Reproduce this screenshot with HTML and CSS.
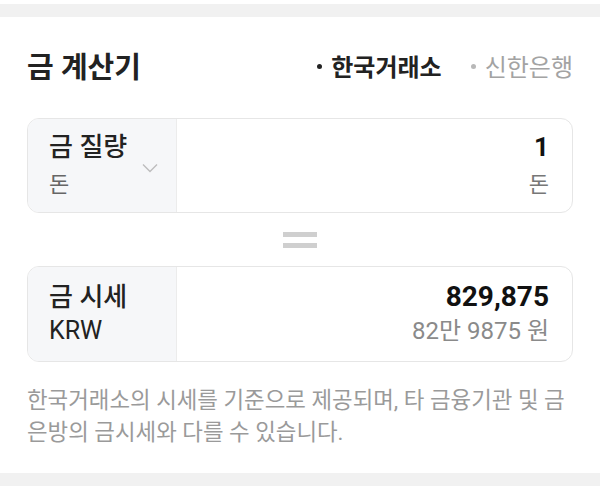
FILE: index.html
```html
<!DOCTYPE html>
<html lang="ko">
<head>
<meta charset="utf-8">
<link rel="stylesheet" href="styles.css">
</head>
<body>
<div class="band band-top"></div>
<section class="card">
  <header class="header">
    <h1 class="title">금 계산기</h1>
    <nav class="tabs">
      <span class="tab tab-active"><span class="dot"></span>한국거래소</span>
      <span class="tab"><span class="dot"></span>신한은행</span>
    </nav>
  </header>

  <div class="box box-weight">
    <div class="cell-left">
      <div class="lines">
        <div class="label">금 질량</div>
        <div class="sub">돈</div>
      </div>
      <svg class="chev" width="16" height="10" viewBox="0 0 16 10"><path d="M1 1.5 L8 8.5 L15 1.5" fill="none" stroke="#bdbdbd" stroke-width="1.4"/></svg>
    </div>
    <div class="cell-right">
      <div class="value">1</div>
      <div class="unit">돈</div>
    </div>
  </div>

  <div class="equals"><span class="bar"></span><span class="bar"></span></div>

  <div class="box box-price">
    <div class="cell-left">
      <div class="lines">
        <div class="label">금 시세</div>
        <div class="label-sm">KRW</div>
      </div>
    </div>
    <div class="cell-right">
      <div class="value">829,875</div>
      <div class="unit unit-gray">82만 9875 원</div>
    </div>
  </div>

  <p class="note">한국거래소의 시세를 기준으로 제공되며, 타 금융기관 및 금은방의 금시세와 다를 수 있습니다.</p>
</section>
<div class="band band-bottom"></div>
</body>
</html>
```

FILE: styles.css
```css
html, body {
  margin: 0;
  padding: 0;
  background: #ffffff;
}
body {
  width: 600px;
  height: 493px;
  overflow: hidden;
  font-family: Roboto, "Noto Sans CJK KR", sans-serif;
  color: #222222;
}
.band {
  height: 13px;
  background: #f1f1f1;
}
.band-top {
  margin-top: 4px;
}
.card {
  padding: 0 27px;
}
.header {
  height: 96px;
  display: flex;
  align-items: center;
  justify-content: space-between;
}
.title {
  margin: 0;
  font-size: 29px;
  font-weight: 700;
  color: #222222;
}
.tabs {
  display: flex;
  gap: 29px;
  font-size: 24px;
}
.tab {
  color: #a3a3a3;
  display: flex;
  align-items: center;
}
.tab-active {
  color: #222222;
  font-weight: 700;
}
.dot {
  width: 5px;
  height: 5px;
  border-radius: 50%;
  background: currentColor;
  margin-right: 9px;
  margin-top: 2px;
}
.tab:not(.tab-active) .dot {
  background: #b8b8b8;
}
.box {
  display: flex;
  border: 1px solid #e6e6e6;
  border-radius: 12px;
  overflow: hidden;
  box-sizing: border-box;
}
.box-weight {
  margin-top: 5px;
  height: 95px;
}
.box-price {
  height: 96px;
}
.cell-left {
  width: 149px;
  background: #f6f7f9;
  border-right: 1px solid #ececec;
  display: flex;
  align-items: center;
  justify-content: space-between;
  padding: 0 18px 0 21px;
  box-sizing: border-box;
}
.box-weight .lines {
  line-height: 38px;
}
.box-price .lines {
  line-height: 34px;
}
.label {
  font-size: 26px;
  font-weight: 500;
  color: #222222;
}
.sub {
  font-size: 22px;
  color: #666666;
}
.label-sm {
  font-size: 25px;
  color: #222222;
}
.chev {
  display: block;
  margin-top: 4px;
}
.cell-right {
  flex: 1;
  text-align: right;
  padding-right: 23px;
  display: flex;
  flex-direction: column;
  justify-content: center;
}
.box-weight .cell-right {
  line-height: 38px;
}
.box-price .cell-right {
  line-height: 34px;
}
.value {
  font-size: 28px;
  font-weight: 700;
  color: #111111;
}
.box-weight .value {
  font-size: 26px;
}
.unit {
  font-size: 22px;
  color: #777777;
}
.unit-gray {
  font-size: 24px;
  color: #8a8a8a;
}
.equals {
  display: flex;
  flex-direction: column;
  align-items: center;
  gap: 6px;
  padding: 19px 0 18px;
}
.bar {
  width: 34px;
  height: 5px;
  background: #cfcfcf;
}
.note {
  margin: 22px 0 25px;
  font-size: 22.4px;
  line-height: 32px;
  color: #9a9a9a;
  height: 64px;
}
```
